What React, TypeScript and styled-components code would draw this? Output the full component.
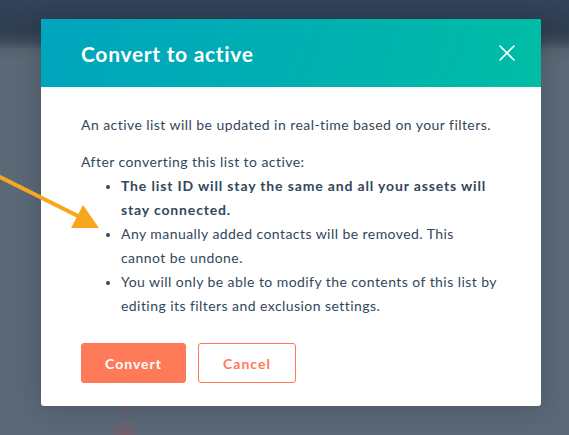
import React from "react";
import styled, { createGlobalStyle } from "styled-components";

const Global = createGlobalStyle`
  html, body { margin: 0; padding: 0; }
  body {
    width: 569px;
    height: 435px;
    overflow: hidden;
    font-family: "Lato", "Noto Sans", sans-serif;
    background:
      radial-gradient(circle at 125px 434px, rgba(140, 85, 95, 0.6) 0, rgba(140, 85, 95, 0) 16px),
      radial-gradient(circle at 125px 404px, rgba(140, 85, 95, 0.35) 0, rgba(140, 85, 95, 0) 14px),
      linear-gradient(180deg, #34445a 0px, #2f3d50 30px, #3e4b5c 42px, #56626f 50px, #5b6876 60px, #5b6877 100%);
  }
`;

const Stage = styled.div`
  position: relative;
  width: 569px;
  height: 435px;
  padding: 19px 0 0 41px;
  box-sizing: border-box;
`;

const Modal = styled.div`
  width: 500px;
  background: #ffffff;
  border-radius: 3px;
  overflow: hidden;
  box-shadow: 0 1px 24px rgba(20, 30, 45, 0.25);
`;

const Header = styled.div`
  height: 68px;
  display: flex;
  align-items: center;
  justify-content: space-between;
  padding: 0 24px 0 40px;
  background: linear-gradient(110deg, #00a4bd 0%, #00afb2 50%, #00bda5 100%);
`;

const Title = styled.h2`
  margin: 0;
  color: #ffffff;
  font-family: "Lato", "Noto Sans", sans-serif;
  font-weight: 700;
  font-size: 21px;
  letter-spacing: 0.7px;
`;

const CloseButton = styled.button`
  width: 20px;
  height: 20px;
  padding: 0;
  border: 0;
  background: transparent;
  display: flex;
  align-items: center;
  justify-content: center;
  cursor: pointer;
`;

const Body = styled.div`
  padding: 26px 40px 23px 40px;
  color: #33475b;
  font-size: 14px;
  line-height: 24px;
  letter-spacing: 0.44px;
`;

const Paragraph = styled.p`
  margin: 0 0 13px 0;
`;

const Intro = styled.p`
  margin: 0;
`;

const List = styled.ul`
  margin: 0;
  padding-left: 40px;
`;

const Item = styled.li<{ $strong?: boolean }>`
  font-weight: ${(p) => (p.$strong ? 700 : 400)};
  letter-spacing: ${(p) => (p.$strong ? "0.85px" : "0.44px")};
  &::marker { font-size: 12px; }
`;

const Actions = styled.div`
  display: flex;
  gap: 12px;
  margin-top: 25px;
`;

const Button = styled.button<{ $primary?: boolean }>`
  height: 40px;
  box-sizing: border-box;
  border-radius: 3px;
  border: 1px solid #ff7a59;
  background: ${(p) => (p.$primary ? "#ff7a59" : "#ffffff")};
  color: ${(p) => (p.$primary ? "#ffffff" : "#ff7a59")};
  font-family: "Lato", "Noto Sans", sans-serif;
  font-weight: 700;
  font-size: 14px;
  letter-spacing: 1px;
  width: ${(p) => (p.$primary ? "105px" : "98px")};
  padding: 0;
  cursor: pointer;
`;

const Arrow = styled.svg`
  position: absolute;
  left: 0;
  top: 0;
  pointer-events: none;
`;

export default function App() {
  return (
    <>
      <Global />
      <Stage>
        <Modal>
          <Header>
            <Title>Convert to active</Title>
            <CloseButton aria-label="Close">
              <svg width="16" height="16" viewBox="0 0 16 16">
                <path d="M1 1 L15 15 M15 1 L1 15" stroke="#ffffff" strokeWidth="1.6" strokeLinecap="round" />
              </svg>
            </CloseButton>
          </Header>
          <Body>
            <Paragraph>An active list will be updated in real-time based on your filters.</Paragraph>
            <Intro>After converting this list to active:</Intro>
            <List>
              <Item $strong>The list ID will stay the same and all your assets will stay connected.</Item>
              <Item>Any manually added contacts will be removed. This cannot be undone.</Item>
              <Item>You will only be able to modify the contents of this list by editing its filters and exclusion settings.</Item>
            </List>
            <Actions>
              <Button $primary>Convert</Button>
              <Button>Cancel</Button>
            </Actions>
          </Body>
        </Modal>
        <Arrow width="120" height="240" viewBox="0 0 120 240">
          <line x1="-4" y1="175" x2="80" y2="217" stroke="#f9a61f" strokeWidth="4" />
          <polygon points="99,228 71,228 83,205" fill="#f9a61f" />
        </Arrow>
      </Stage>
    </>
  );
}
